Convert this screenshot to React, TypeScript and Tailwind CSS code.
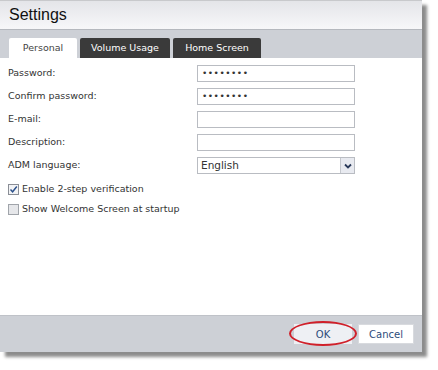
import React from "react";

const Row = ({ label, children }: { label: string; children: React.ReactNode }) => (
  <div className="flex items-center h-[23px]">
    <div className="w-[197px] pl-[8px]">{label}</div>
    {children}
  </div>
);

const Input = ({ value }: { value?: string }) => (
  <div className="w-[158px] h-[17px] border border-[#b9bcc2] bg-white flex items-center pl-[4px] text-[9px] tracking-[0.5px]">
    {value}
  </div>
);

export default function App() {
  return (
    <div className="w-[438px] h-[370px] bg-white relative" style={{ fontFamily: '"DejaVu Sans", Verdana, sans-serif' }}>
      <div className="w-[422px] h-[352px] flex flex-col border-t border-[#c8c9cc] shadow-[5px_5px_3px_rgba(0,0,0,0.45)] bg-white">
        <div className="h-[28px] bg-gradient-to-b from-[#e4e5e9] to-[#f7f7f9] flex items-center pl-[9px] text-[16px] text-[#111]" style={{ fontFamily: '"Liberation Sans", Arial, sans-serif' }}>
          Settings
        </div>
        <div className="h-[29px] bg-[#cdd0d6] border-t border-[#b5b8be] flex items-end pl-[9px] gap-[3px] text-[9.5px]">
          <div className="w-[68px] h-[20px] bg-white flex items-center justify-center text-[#444] rounded-t-[2px]">Personal</div>
          <div className="w-[90px] h-[20px] bg-[#3a3a3a] flex items-center justify-center text-white rounded-t-[2px]">Volume Usage</div>
          <div className="w-[88px] h-[20px] bg-[#3a3a3a] flex items-center justify-center text-white rounded-t-[2px]">Home Screen</div>
        </div>
        <div className="flex-1 bg-white text-[9.5px] text-[#333] pt-[4px]">
          <Row label="Password:"><Input value="••••••••" /></Row>
          <Row label="Confirm password:"><Input value="••••••••" /></Row>
          <Row label="E-mail:"><Input /></Row>
          <Row label="Description:"><Input /></Row>
          <Row label="ADM language:">
            <div className="w-[158px] h-[17px] border border-[#b9bcc2] bg-white flex items-center justify-between text-[10.5px]">
              <span className="pl-[3px]">English</span>
              <div className="w-[14px] h-full bg-[#e8eaf0] border-l border-[#c5c8ce] flex items-center justify-center">
                <svg width="8" height="6" viewBox="0 0 8 6"><path d="M1 1.5 L4 4.5 L7 1.5" stroke="#2a3a5a" strokeWidth="1.8" fill="none" /></svg>
              </div>
            </div>
          </Row>
          <div className="flex items-center h-[20px] pl-[8px] mt-[2px]">
            <div className="w-[11px] h-[11px] border border-[#8a8e96] bg-[#f2f3f5] mr-[3px] flex items-center justify-center">
              <svg width="9" height="9" viewBox="0 0 9 9"><path d="M1.5 4.5 L3.6 6.8 L7.8 1.5" stroke="#2a4f8a" strokeWidth="1.4" fill="none" /></svg>
            </div>
            Enable 2-step verification
          </div>
          <div className="flex items-center h-[20px] pl-[8px]">
            <div className="w-[11px] h-[11px] border border-[#a0a4aa] bg-[#e6e7ea] mr-[3px]" />
            Show Welcome Screen at startup
          </div>
        </div>
        <div className="h-[37px] bg-[#cdd0d6] border-t border-[#bfc2c8] flex items-center justify-end pr-[8px] gap-[6px] text-[10px] text-[#2d4b7a]">
          <div className="relative w-[58px] h-[20px] bg-[#eef0f4] flex items-center justify-center">
            OK
            <div className="absolute left-[-5px] top-[-3px] w-[68px] h-[25px] rounded-[50%] border-[2px] border-[#d0202a]" />
          </div>
          <div className="w-[56px] h-[20px] bg-white border border-[#d8dade] flex items-center justify-center">Cancel</div>
        </div>
      </div>
    </div>
  );
}
